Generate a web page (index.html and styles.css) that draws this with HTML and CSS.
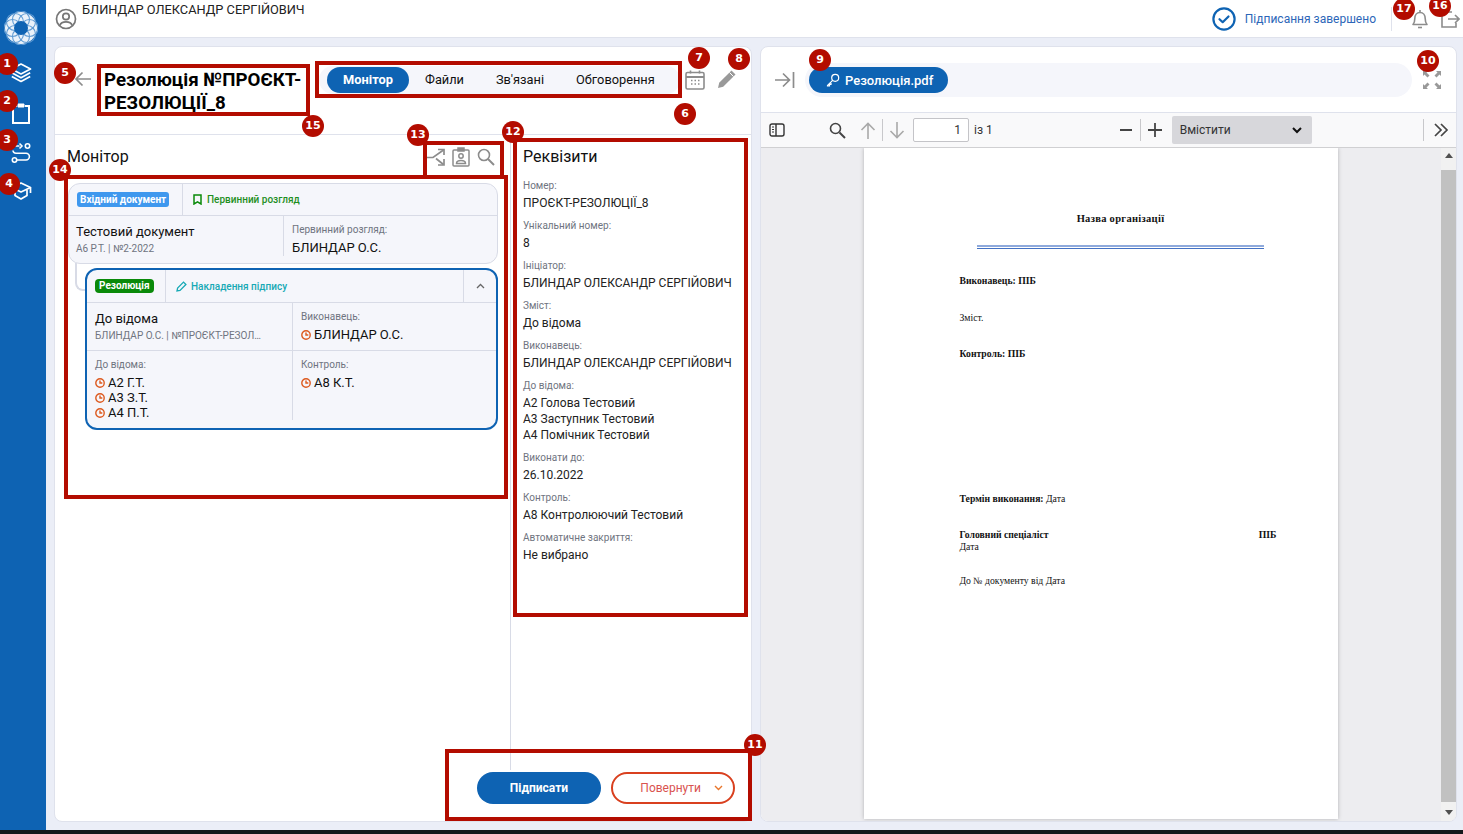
FILE: index.html
```html
<!DOCTYPE html>
<html lang="uk">
<head>
    <meta charset="UTF-8">
    <title>Резолюція</title>
    <link rel="stylesheet" href="styles.css">
</head>
<body>
<div class="app">
    <aside class="sidebar">
        <svg class="logo" width="34" height="34" viewBox="0 0 34 34" fill="none">
            <circle cx="17" cy="17" r="16" fill="#eaf2fa"/>
            <g stroke="#5f9bd3" stroke-width="1.100">
                <circle cx="17" cy="8.500" r="8.500"/>
                <circle cx="17" cy="8.500" r="8.500" transform="rotate(45 17 17)"/>
                <circle cx="17" cy="8.500" r="8.500" transform="rotate(90 17 17)"/>
                <circle cx="17" cy="8.500" r="8.500" transform="rotate(135 17 17)"/>
                <circle cx="17" cy="8.500" r="8.500" transform="rotate(180 17 17)"/>
                <circle cx="17" cy="8.500" r="8.500" transform="rotate(225 17 17)"/>
                <circle cx="17" cy="8.500" r="8.500" transform="rotate(270 17 17)"/>
                <circle cx="17" cy="8.500" r="8.500" transform="rotate(315 17 17)"/>
            </g>
            <circle cx="17" cy="17" r="7" fill="#0e63b3"/>
        </svg>
        <nav class="side-nav">
            <svg width="22" height="22" viewBox="0 0 22 22" fill="none" stroke="#fff" stroke-width="1.700" stroke-linejoin="round"><path d="M11 2l9.500 5-9.500 5-9.500-5z"/><path d="M1.800 10.800L11 15.800l9.200-5"/><path d="M1.800 14.500L11 19.500l9.200-5"/></svg>
            <svg width="22" height="24" viewBox="0 0 22 24" fill="none" stroke="#fff" stroke-width="2"><path d="M7 5H3v17h16V5h-4"/><path d="M8 3h6v3H8z" fill="#fff" stroke-width="1"/></svg>
            <svg width="22" height="22" viewBox="0 0 22 22" fill="none" stroke="#fff" stroke-width="1.600"><circle cx="17.500" cy="4" r="2.200"/><circle cx="4.500" cy="18" r="2.200"/><path d="M2.500 4h7M9.500 1.500L12 4 9.500 6.500"/><path d="M7 18h9a3.400 3.400 0 0 0 0-6.800H6a3 3 0 0 1-3-2.700"/></svg>
            <svg width="22" height="20" viewBox="0 0 22 20" fill="none" stroke="#fff" stroke-width="1.700" stroke-linejoin="round"><path d="M11 2l9.500 4.500L11 11 1.500 6.500z"/><path d="M5 9v5.500l6 3.500 6-3.500V9"/><path d="M20.500 6.500V12"/></svg>
        </nav>
    </aside>

    <div class="main">
        <header class="topbar">
            <svg class="user-icon" width="22" height="22" viewBox="0 0 22 22" fill="none" stroke="#777" stroke-width="1.700"><circle cx="11" cy="11" r="9.500"/><circle cx="11" cy="8.500" r="3.200"/><path d="M4.800 17.500c1-3 3.500-3.600 6.200-3.600s5.200.6 6.200 3.600"/></svg>
            <span class="user-name">БЛИНДАР ОЛЕКСАНДР СЕРГІЙОВИЧ</span>
            <div class="status">
                <svg width="24" height="24" viewBox="0 0 24 24" fill="none" stroke="#0e63b3" stroke-width="2.200"><circle cx="12" cy="12" r="10.600"/><path d="M7.500 12.200l3.200 3 5.800-5.700" stroke-linecap="round" stroke-linejoin="round"/></svg>
                <span>Підписання завершено</span>
            </div>
            <div class="top-actions">
                <svg width="20" height="22" viewBox="0 0 20 22" fill="none" stroke="#8c8c8c" stroke-width="1.600"><path d="M3 16.500c1.500-1.500 1.800-3 1.800-6 0-3.500 2-6 5.200-6s5.200 2.500 5.200 6c0 3 .3 4.500 1.800 6z" stroke-linejoin="round"/><path d="M8 19.500h4"/><path d="M10 2v2.500"/></svg>
                <svg width="20" height="20" viewBox="0 0 20 20" fill="none" stroke="#8c8c8c" stroke-width="1.600"><path d="M12 3H2v15h14v-4"/><path d="M8 10h11M15 6l4 4-4 4"/></svg>
            </div>
        </header>

        <div class="content">
            <section class="panel panel-left">
                <div class="doc-header">
                    <svg class="back" width="18" height="16" viewBox="0 0 18 16" fill="none" stroke="#8c8c8c" stroke-width="1.700"><path d="M17 8H2M8.500 1.500L2 8l6.500 6.500"/></svg>
                    <h1 class="doc-title">Резолюція №ПРОЄКТ-РЕЗОЛЮЦІЇ_8</h1>
                    <div class="tabs">
                        <span class="tab active">Монітор</span>
                        <span class="tab tab-files">Файли</span>
                        <span class="tab tab-rel">Зв'язані</span>
                        <span class="tab tab-disc">Обговорення</span>
                    </div>
                    <svg class="cal" width="22" height="22" viewBox="0 0 22 22" fill="none" stroke="#8c8c8c" stroke-width="1.600"><rect x="2" y="3.500" width="18" height="16.500" rx="1.500"/><path d="M2 8h18" stroke-width="2"/><path d="M6.500 1.500v3M15.500 1.500v3"/><path d="M7 11.500h1.500M10.500 11.500H12M14 11.500h1.500M7 15h1.500M10.500 15H12M14 15h1.500" stroke-width="1.400"/></svg>
                    <svg class="pen" width="22" height="22" viewBox="0 0 22 22"><path d="M2 20l1.200-5.200L15.500 2.500l4 4L7.200 18.800z" fill="#999"/><path d="M13.500 4.500l4 4" stroke="#fff" stroke-width="1"/></svg>
                </div>

                <div class="doc-body">
                    <div class="monitor">
                        <div class="monitor-head">
                            <h2 class="section-title">Монітор</h2>
                            <div class="monitor-tools">
                                <svg width="18" height="18" viewBox="0 0 18 18" fill="none" stroke="#8c8c8c" stroke-width="1.700"><path d="M0 9.500h6L16.500 2"/><path d="M11 1.500h6V7"/><path d="M9 10.500l7.500 6"/><path d="M17 11v6h-6"/></svg>
                                <svg width="18" height="20" viewBox="0 0 18 20" fill="none" stroke="#8c8c8c" stroke-width="1.500"><rect x="1" y="3" width="16" height="16" rx="1"/><rect x="6" y="1" width="6" height="3" fill="#8c8c8c"/><circle cx="9" cy="9" r="2.200"/><path d="M4.500 16.500c0-2.500 2-3 4.500-3s4.500.5 4.500 3z"/></svg>
                                <svg width="18" height="18" viewBox="0 0 18 18" fill="none" stroke="#8c8c8c" stroke-width="1.600"><circle cx="7" cy="7" r="5.500"/><path d="M11 11l6 6" stroke-width="2"/></svg>
                            </div>
                        </div>

                        <div class="tree">
                            <article class="card card-in">
                                <div class="card-row card-row-head">
                                    <div class="cell cell-badge-in"><span class="badge badge-blue">Вхідний документ</span></div>
                                    <div class="cell cell-state">
                                        <svg width="9" height="11" viewBox="0 0 9 11" fill="none" stroke="#0a8a0a" stroke-width="1.500"><path d="M1 1h7v9L4.500 7.800 1 10z"/></svg>
                                        <span class="state-green">Первинний розгляд</span>
                                    </div>
                                </div>
                                <div class="card-row">
                                    <div class="cell cell-main-in">
                                        <div class="card-title">Тестовий документ</div>
                                        <div class="card-sub">А6 Р.Т. | №2-2022</div>
                                    </div>
                                    <div class="cell cell-side">
                                        <div class="card-label">Первинний розгляд:</div>
                                        <div class="card-value">БЛИНДАР О.С.</div>
                                    </div>
                                </div>
                            </article>

                            <div class="link-line"></div>

                            <article class="card card-res">
                                <div class="card-row card-row-head-res">
                                    <div class="cell cell-badge-res"><span class="badge badge-green">Резолюція</span></div>
                                    <div class="cell cell-state-res">
                                        <svg width="11" height="11" viewBox="0 0 11 11" fill="none" stroke="#17a9b5" stroke-width="1.300"><path d="M1 10l.6-3L7.500 1.100l2.400 2.400L4 9.400z"/></svg>
                                        <span class="state-teal">Накладення підпису</span>
                                    </div>
                                    <div class="cell cell-toggle">
                                        <svg width="9" height="6" viewBox="0 0 9 6" fill="none" stroke="#666" stroke-width="1.300"><path d="M1 5l3.500-3.500L8 5"/></svg>
                                    </div>
                                </div>
                                <div class="card-row card-row-info">
                                    <div class="cell cell-main-res cell-main-top">
                                        <div class="card-title">До відома</div>
                                        <div class="card-sub card-sub-cut">БЛИНДАР О.С. | №ПРОЄКТ-РЕЗОЛЮЦІЇ_8</div>
                                    </div>
                                    <div class="cell cell-side-res">
                                        <div class="card-label">Виконавець:</div>
                                        <div class="person"><svg class="clock" viewBox="0 0 10 10"><circle cx="5" cy="5" r="4.200"/><path d="M5 2.500V5h2.300"/></svg>БЛИНДАР О.С.</div>
                                    </div>
                                </div>
                                <div class="card-row card-row-people">
                                    <div class="cell cell-main-res">
                                        <div class="card-label">До відома:</div>
                                        <div class="person"><svg class="clock" viewBox="0 0 10 10"><circle cx="5" cy="5" r="4.200"/><path d="M5 2.500V5h2.300"/></svg>А2 Г.Т.</div>
                                        <div class="person"><svg class="clock" viewBox="0 0 10 10"><circle cx="5" cy="5" r="4.200"/><path d="M5 2.500V5h2.300"/></svg>А3 З.Т.</div>
                                        <div class="person"><svg class="clock" viewBox="0 0 10 10"><circle cx="5" cy="5" r="4.200"/><path d="M5 2.500V5h2.300"/></svg>А4 П.Т.</div>
                                    </div>
                                    <div class="cell cell-side-res">
                                        <div class="card-label">Контроль:</div>
                                        <div class="person"><svg class="clock" viewBox="0 0 10 10"><circle cx="5" cy="5" r="4.200"/><path d="M5 2.500V5h2.300"/></svg>А8 К.Т.</div>
                                    </div>
                                </div>
                            </article>
                        </div>
                    </div>

                    <div class="requisites">
                        <h2 class="section-title req-title">Реквізити</h2>
                        <div class="req"><div class="req-label">Номер:</div><div class="req-value">ПРОЄКТ-РЕЗОЛЮЦІЇ_8</div></div>
                        <div class="req"><div class="req-label">Унікальний номер:</div><div class="req-value">8</div></div>
                        <div class="req"><div class="req-label">Ініціатор:</div><div class="req-value">БЛИНДАР ОЛЕКСАНДР СЕРГІЙОВИЧ</div></div>
                        <div class="req"><div class="req-label">Зміст:</div><div class="req-value">До відома</div></div>
                        <div class="req"><div class="req-label">Виконавець:</div><div class="req-value">БЛИНДАР ОЛЕКСАНДР СЕРГІЙОВИЧ</div></div>
                        <div class="req"><div class="req-label">До відома:</div><div class="req-value">А2 Голова Тестовий</div><div class="req-value">А3 Заступник Тестовий</div><div class="req-value">А4 Помічник Тестовий</div></div>
                        <div class="req"><div class="req-label">Виконати до:</div><div class="req-value">26.10.2022</div></div>
                        <div class="req"><div class="req-label">Контроль:</div><div class="req-value">А8 Контролюючий Тестовий</div></div>
                        <div class="req"><div class="req-label">Автоматичне закриття:</div><div class="req-value">Не вибрано</div></div>
                    </div>
                </div>

                <div class="doc-footer">
                    <button class="btn btn-sign">Підписати</button>
                    <button class="btn btn-return">Повернути
                        <svg width="9" height="6" viewBox="0 0 9 6" fill="none" stroke="#e8762c" stroke-width="1.400"><path d="M1 1l3.500 3.500L8 1"/></svg>
                    </button>
                </div>
            </section>

            <section class="panel panel-right">
                <div class="file-header">
                    <svg width="20" height="16" viewBox="0 0 20 16" fill="none" stroke="#8c8c8c" stroke-width="1.700"><path d="M0 8h14M8 1.500L14.500 8 8 14.500M18.500 0v16"/></svg>
                    <div class="file-bar">
                        <span class="file-pill">
                            <svg width="14" height="14" viewBox="0 0 14 14" fill="none" stroke="#fff" stroke-width="1.200"><circle cx="9.200" cy="4.800" r="3.500"/><path d="M6.600 7.400L1.500 12.500V13h2v-1.500h1.500V10"/></svg>
                            Резолюція.pdf
                        </span>
                    </div>
                    <svg width="18" height="18" viewBox="0 0 18 18" fill="#999"><path d="M0 0h5L3.500 1.500l3 3-2 2-3-3L0 5zM18 0v5l-1.500-1.500-3 3-2-2 3-3L13 0zM0 18v-5l1.500 1.500 3-3 2 2-3 3L5 18zM18 18h-5l1.500-1.500-3-3 2-2 3 3L18 13z"/></svg>
                </div>

                <div class="pdf-toolbar">
                    <svg class="tb-sidebar" width="16" height="14" viewBox="0 0 16 14" fill="none" stroke="#333" stroke-width="1.400"><rect x="1" y="1" width="14" height="12" rx="2"/><path d="M7 1v12"/><path d="M3 4h2M3 6.500h2M3 9h2" stroke-width="1"/></svg>
                    <svg class="tb-search" width="17" height="17" viewBox="0 0 17 17" fill="none" stroke="#444" stroke-width="1.600"><circle cx="6.500" cy="6.500" r="5"/><path d="M10.500 10.500L16 16" stroke-width="2"/></svg>
                    <svg class="tb-up" width="16" height="17" viewBox="0 0 16 17" fill="none" stroke="#a9a9a9" stroke-width="1.600"><path d="M8 17V2M1.500 8L8 1.500 14.500 8"/></svg>
                    <span class="tb-sep"></span>
                    <svg class="tb-down" width="16" height="17" viewBox="0 0 16 17" fill="none" stroke="#a9a9a9" stroke-width="1.600"><path d="M8 0v15M1.500 9L8 15.500 14.500 9"/></svg>
                    <span class="page-input">1</span>
                    <span class="page-total">із 1</span>
                    <svg class="tb-minus" width="14" height="14" viewBox="0 0 14 14" stroke="#444" stroke-width="1.800"><path d="M1 7h12"/></svg>
                    <span class="tb-sep tb-sep-zoom"></span>
                    <svg class="tb-plus" width="16" height="16" viewBox="0 0 16 16" stroke="#444" stroke-width="1.800"><path d="M1 8h14M8 1v14"/></svg>
                    <div class="zoom-select">
                        <span>Вмістити</span>
                        <svg width="10" height="7" viewBox="0 0 10 7" fill="none" stroke="#111" stroke-width="2"><path d="M1 1l4 4 4-4"/></svg>
                    </div>
                    <span class="tb-sep tb-sep-more"></span>
                    <svg class="tb-more" width="16" height="14" viewBox="0 0 16 14" fill="none" stroke="#444" stroke-width="1.700"><path d="M2 1l6 6-6 6M8 1l6 6-6 6"/></svg>
                </div>

                <div class="pdf-view">
                    <div class="pdf-canvas">
                        <div class="pdf-page">
                            <div class="pdf-org">Назва організації</div>
                            <div class="pdf-rule"></div>
                            <p class="pdf-line line-exec"><b>Виконавець: ПІБ</b></p>
                            <p class="pdf-line line-text">Зміст.</p>
                            <p class="pdf-line line-ctrl"><b>Контроль: ПІБ</b></p>
                            <p class="pdf-line line-term"><b>Термін виконання:</b> Дата</p>
                            <p class="pdf-line line-head"><b>Головний спеціаліст</b><b>ПІБ</b></p>
                            <p class="pdf-line line-date">Дата</p>
                            <p class="pdf-line line-ref">До № документу від Дата</p>
                        </div>
                    </div>
                    <div class="scrollbar">
                        <span class="arrow-up"></span>
                        <span class="thumb"></span>
                        <span class="arrow-down"></span>
                    </div>
                </div>
            </section>
        </div>
    </div>
</div>
<div class="strip"></div>

<!-- позначки поверх скриншота -->
<div class="frame f-title"></div>
<div class="frame f-tabs"></div>
<div class="frame f-tools"></div>
<div class="frame f-req"></div>
<div class="frame f-tree"></div>
<div class="frame f-foot"></div>

<span class="mark m1">1</span>
<span class="mark m2">2</span>
<span class="mark m3">3</span>
<span class="mark m4">4</span>
<span class="mark m5">5</span>
<span class="mark m6">6</span>
<span class="mark m7">7</span>
<span class="mark m8">8</span>
<span class="mark m9">9</span>
<span class="mark m10">10</span>
<span class="mark m11">11</span>
<span class="mark m12">12</span>
<span class="mark m13">13</span>
<span class="mark m14">14</span>
<span class="mark m15">15</span>
<span class="mark m16">16</span>
<span class="mark m17">17</span>
</body>
</html>
```

FILE: styles.css
```css
* {
    box-sizing: border-box;
}

html, body {
    height: 100%;
}

body {
    position: relative;
    margin: 0;
    overflow: hidden;
    background-color: #ebeef7;
    font-family: Roboto, "Liberation Sans", sans-serif;
    color: #111;
}

h1, h2, p {
    margin: 0;
    font-weight: normal;
}

svg {
    display: block;
    flex: none;
}

.app {
    display: flex;
    height: 830px;
}

.strip {
    height: 4px;
    background-color: #15181c;
}

/* sidebar */
.sidebar {
    width: 46px;
    flex: none;
    background-color: #0e63b3;
    display: flex;
    flex-direction: column;
    align-items: center;
    padding-top: 11px;
    padding-right: 4px;
}

.side-nav {
    display: flex;
    flex-direction: column;
    align-items: center;
    margin-top: 17px;
    gap: 17px;
}

/* top */
.main {
    flex: 1;
    min-width: 0;
    display: flex;
    flex-direction: column;
}

.topbar {
    height: 38px;
    flex: none;
    background-color: #fff;
    border-bottom: 1px solid #dfe2ec;
    display: flex;
    align-items: center;
    padding-left: 9px;
}

.user-name {
    font-size: 12.800px;
    margin-left: 5px;
    margin-bottom: 18px;
    color: #222;
}

.status {
    margin-left: auto;
    display: flex;
    align-items: center;
    gap: 9px;
    font-size: 12px;
    color: #2c66b8;
}

.top-actions {
    display: flex;
    align-items: center;
    gap: 10px;
    margin-left: 15px;
    padding-left: 18px;
    margin-right: 3px;
    border-left: 1px solid #dfe2ec;
    height: 24px;
}

.content {
    flex: 1;
    min-height: 0;
    display: flex;
    gap: 8px;
    padding: 8px 6px 8px 8px;
}

.panel {
    background-color: #fff;
    border: 1px solid #dfe2ec;
    border-radius: 8px;
    overflow: hidden;
    display: flex;
    flex-direction: column;
}

.panel-left {
    width: 698px;
    flex: none;
}

.panel-right {
    flex: 1;
    min-width: 0;
}

/* header of the document */
.doc-header {
    height: 88px;
    flex: none;
    border-bottom: 1px solid #dfe2ec;
    display: flex;
    align-items: flex-start;
    padding-left: 19px;
}

.back {
    margin-top: 24px;
}

.doc-title {
    width: 205px;
    margin-left: 12px;
    margin-top: 22px;
    font-size: 18.720px;
    line-height: 23px;
    font-weight: 700;
    color: #000;
}

.tabs {
    width: 361px;
    height: 28px;
    margin-top: 19px;
    margin-left: 10px;
    background-color: #f5f6fb;
    border-radius: 14px;
    display: flex;
    align-items: center;
    padding-left: 8px;
    font-size: 12.800px;
    color: #111;
}

.tab {
    line-height: 26px;
    text-align: center;
}

.tab.active {
    width: 82px;
    background-color: #0e63b3;
    color: #fff;
    font-weight: 700;
    border-radius: 13px;
}

.tab-files {
    margin-left: 16px;
}

.tab-rel {
    margin-left: 32px;
}

.tab-disc {
    margin-left: 32px;
}

.cal {
    margin-top: 22px;
    margin-left: 4px;
}

.pen {
    margin-top: 21px;
    margin-left: 10px;
}

/* body */
.doc-body {
    flex: 1;
    min-height: 0;
    display: flex;
}

.monitor {
    width: 456px;
    flex: none;
    border-right: 1px solid #d8dbe6;
}

.monitor-head {
    height: 40px;
    display: flex;
    align-items: center;
    justify-content: space-between;
    padding: 4px 15px 0 12px;
}

.section-title {
    font-size: 16px;
    line-height: 20px;
    color: #111;
}

.monitor-tools {
    display: flex;
    align-items: center;
    gap: 7px;
}

.tree {
    padding: 8px 12px 0 13px;
}

.card {
    background-color: #f5f6fb;
    border-radius: 12px;
}

.card-in {
    position: relative;
    z-index: 1;
    border: 1px solid #d8dbe6;
    height: 81px;
}

.card-res {
    position: relative;
    margin-left: 17px;
    margin-top: -23px;
    border: 2px solid #0e63b3;
    height: 162px;
    z-index: 1;
}

.link-line {
    width: 30px;
    height: 28px;
    margin-left: 7px;
    margin-top: -1px;
    border: 2px solid #d8dbe6;
    border-top: none;
    border-right: none;
    border-radius: 0 0 0 8px;
}

.card-row {
    display: flex;
    border-bottom: 1px solid #d8dbe6;
}

.card-row:last-child {
    border-bottom: none;
}

.card-row-head {
    height: 32px;
}

.card-row-head-res {
    height: 33px;
}

.card-row-info {
    height: 48px;
}

.card-row-people {
    flex: 1;
}

.cell {
    border-right: 1px solid #d8dbe6;
}

.cell:last-child {
    border-right: none;
}

.cell-badge-in {
    width: 114px;
    padding: 8px 0 0 8px;
}

.cell-state {
    display: flex;
    align-items: center;
    gap: 5px;
    padding-left: 10px;
}

.cell-badge-res {
    width: 79px;
    padding: 9px 0 0 8px;
}

.cell-state-res {
    flex: 1;
    display: flex;
    align-items: center;
    gap: 4px;
    padding-left: 10px;
}

.cell-toggle {
    width: 32px;
    display: flex;
    align-items: center;
    justify-content: center;
}

.badge {
    display: block;
    width: fit-content;
    font-size: 10px;
    line-height: 15px;
    font-weight: 700;
    color: #fff;
    padding: 0 3px;
    border-radius: 3px;
}

.badge-blue {
    background-color: #3f98ee;
}

.badge-green {
    background-color: #0a8a0a;
    padding: 0 4px;
    border-radius: 4px;
    line-height: 14px;
}

.state-green {
    font-size: 10px;
    font-weight: 500;
    color: #1f8f1f;
}

.state-teal {
    font-size: 10px;
    font-weight: 500;
    color: #17a9b5;
}

.cell-main-in {
    width: 215px;
    padding: 8px 0 0 7px;
}

.cell-main-in .card-sub {
    margin-top: 2px;
}

.cell-side {
    flex: 1;
    padding: 7px 0 0 8px;
}

.cell-main-res {
    width: 206px;
    min-width: 0;
    padding: 7px 8px 0 8px;
}

.cell-main-top {
    padding-top: 8px;
}

.cell-main-top .card-sub {
    margin-top: 2px;
}

.cell-side-res {
    flex: 1;
    padding: 7px 0 0 8px;
}

.card-title {
    font-size: 13px;
    line-height: 16px;
    color: #111;
}

.card-sub {
    font-size: 10px;
    line-height: 13px;
    margin-top: 3px;
    color: #6f7480;
}

.card-sub-cut {
    white-space: nowrap;
    overflow: hidden;
    text-overflow: ellipsis;
    width: 172px;
}

.card-label {
    font-size: 10px;
    line-height: 13px;
    color: #6f7480;
}

.card-value {
    font-size: 13px;
    line-height: 16px;
    margin-top: 4px;
}

.person {
    display: flex;
    align-items: center;
    gap: 3px;
    font-size: 13px;
    line-height: 15px;
    color: #111;
}

.cell-side-res .card-label + .person,
.cell-main-res .card-label + .person {
    margin-top: 4px;
}

.clock {
    width: 10px;
    height: 10px;
    fill: none;
    stroke: #dd5a1f;
    stroke-width: 1.400;
}

/* requisites */
.requisites {
    flex: 1;
    padding: 12px 0 0 12px;
}

.req-title {
    margin-bottom: 12px;
}

.req {
    margin-bottom: 8px;
}

.req-label {
    font-size: 10px;
    line-height: 14px;
    margin-bottom: 2px;
    color: #6f7480;
}

.req-value {
    font-size: 12px;
    line-height: 16px;
    color: #222;
}

/* footer */
.doc-footer {
    height: 51px;
    flex: none;
    display: flex;
    justify-content: flex-end;
    align-items: flex-start;
    gap: 10px;
    padding: 2px 16px 0 0;
}

.btn {
    width: 124px;
    height: 32px;
    border-radius: 16px;
    font-family: inherit;
    font-size: 12px;
}

.btn-sign {
    background-color: #0e63b3;
    border: none;
    color: #fff;
    font-weight: 700;
}

.btn-return {
    background-color: #fff;
    border: 2px solid #d9401f;
    color: #d9534f;
    display: flex;
    align-items: center;
    justify-content: flex-end;
    gap: 13px;
    padding-right: 10px;
}

/* right panel */
.file-header {
    height: 66px;
    flex: none;
    display: flex;
    align-items: center;
    padding: 1px 15px 0 14px;
    border-bottom: 1px solid #dfe2ec;
}

.file-bar {
    width: 610px;
    height: 34px;
    margin: 0 11px 0 10px;
    background-color: #f5f6fb;
    border-radius: 17px;
    display: flex;
    align-items: center;
    padding-left: 4px;
}

.file-pill {
    width: 139px;
    height: 26px;
    background-color: #0e63b3;
    border-radius: 13px;
    color: #fff;
    font-size: 13px;
    font-weight: 500;
    display: flex;
    align-items: center;
    gap: 5px;
    padding-left: 17px;
}

.pdf-toolbar {
    height: 35px;
    flex: none;
    background-color: #f9f9fa;
    border-bottom: 1px solid #d0d0d2;
    display: flex;
    align-items: center;
    position: relative;
    font-size: 12px;
    color: #333;
    padding-left: 8px;
}

.tb-search {
    margin-left: 44px;
}

.tb-up {
    margin-left: 14px;
}

.tb-sep {
    width: 1px;
    height: 22px;
    background-color: #c8c8cb;
    margin-left: 6px;
    flex: none;
}

.tb-down {
    margin-left: 6px;
}

.page-input {
    width: 56px;
    height: 24px;
    margin-left: 8px;
    background-color: #fff;
    border: 1px solid #c4c4c8;
    border-radius: 2px;
    text-align: right;
    line-height: 22px;
    padding-right: 7px;
}

.page-total {
    margin-left: 5px;
}

.tb-minus {
    margin-left: 126px;
}

.tb-sep-zoom {
    margin-left: 7px;
}

.tb-plus {
    margin-left: 6px;
}

.zoom-select {
    width: 140px;
    height: 28px;
    margin-left: 9px;
    background-color: #d7d7db;
    border-radius: 2px;
    display: flex;
    align-items: center;
    justify-content: space-between;
    padding: 0 10px 0 8px;
}

.tb-sep-more {
    margin-left: 111px;
}

.tb-more {
    margin-left: 9px;
}

.pdf-view {
    flex: 1;
    min-height: 0;
    display: flex;
    background-color: #ededf0;
}

.pdf-canvas {
    flex: 1;
    display: flex;
    justify-content: center;
    padding-right: 1px;
}

.pdf-page {
    width: 474px;
    height: 671px;
    background-color: #fff;
    box-shadow: 0 0 4px rgba(0, 0, 0, .25);
    padding: 65px 61px 0 96px;
    font-family: "Liberation Serif", serif;
    font-size: 9.700px;
    line-height: 12px;
    color: #111;
}

.pdf-org {
    text-align: center;
    font-weight: 700;
    font-size: 10.500px;
    letter-spacing: .3px;
    margin-right: -5px;
}

.pdf-rule {
    width: 287px;
    height: 4px;
    margin: 20px 0 0 17px;
    border-top: 2px solid #8faadc;
    border-bottom: 1px solid #4472c4;
}

.line-exec {
    margin-top: 26px;
}

.line-text {
    margin-top: 25px;
}

.line-ctrl {
    margin-top: 24px;
}

.line-term {
    margin-top: 133px;
}

.line-head {
    margin-top: 24px;
    display: flex;
    justify-content: space-between;
}

.line-ref {
    margin-top: 22px;
}

.scrollbar {
    width: 15px;
    flex: none;
    background-color: #f1f1f1;
    display: flex;
    flex-direction: column;
    align-items: center;
}

.arrow-up,
.arrow-down {
    width: 0;
    height: 0;
    flex: none;
    border-left: 4px solid transparent;
    border-right: 4px solid transparent;
}

.arrow-up {
    margin-top: 5px;
    border-bottom: 5px solid #505050;
}

.arrow-down {
    margin: 8px 0 6px;
    border-top: 5px solid #505050;
}

.thumb {
    flex: 1;
    width: 100%;
    margin-top: 12px;
    background-color: #c1c1c1;
}

/* annotations */
.frame {
    position: absolute;
    border: 4px solid #b30c00;
}

.f-title {
    left: 97px;
    top: 64px;
    width: 213px;
    height: 52px;
}

.f-tabs {
    left: 315px;
    top: 61px;
    width: 367px;
    height: 37px;
}

.f-tools {
    left: 423px;
    top: 141px;
    width: 81px;
    height: 38px;
}

.f-req {
    left: 513px;
    top: 138px;
    width: 235px;
    height: 479px;
}

.f-tree {
    left: 64px;
    top: 175px;
    width: 444px;
    height: 324px;
}

.f-foot {
    left: 445px;
    top: 749px;
    width: 307px;
    height: 72px;
}

.mark {
    position: absolute;
    width: 22px;
    height: 22px;
    margin: -10px 0 0 -11px;
    border-radius: 50%;
    background-color: #b30c00;
    color: #fff;
    font-family: "DejaVu Sans", sans-serif;
    font-size: 11px;
    font-weight: 700;
    line-height: 21px;
    text-align: center;
}

.m1 { left: 7px; top: 63px; }
.m2 { left: 7px; top: 100px; }
.m3 { left: 7px; top: 139px; }
.m4 { left: 9px; top: 183px; }
.m5 { left: 65px; top: 72px; }
.m6 { left: 685px; top: 113px; }
.m7 { left: 699px; top: 57px; }
.m8 { left: 739px; top: 58px; }
.m9 { left: 820px; top: 59px; }
.m10 { left: 1428px; top: 60px; }
.m11 { left: 755px; top: 744px; }
.m12 { left: 513px; top: 131px; }
.m13 { left: 418px; top: 134px; }
.m14 { left: 60px; top: 169px; }
.m15 { left: 313px; top: 125px; }
.m16 { left: 1440px; top: 5px; }
.m17 { left: 1404px; top: 8px; }
```
